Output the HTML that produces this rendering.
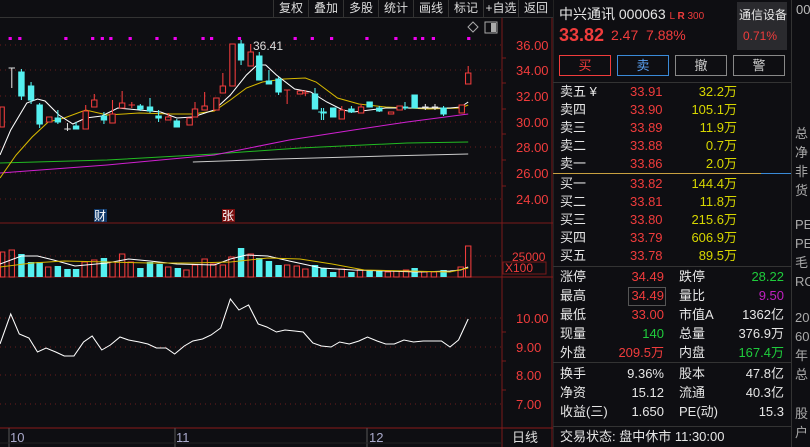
<!DOCTYPE html>
<html><head><meta charset="utf-8"><style>
*{margin:0;padding:0;box-sizing:border-box}
body{width:810px;height:447px;background:#0e0e12;overflow:hidden;position:relative;font-family:"Liberation Sans","Noto Sans CJK SC",sans-serif;color:#ddd}
.abs{position:absolute;white-space:nowrap}
.tb{position:absolute;top:0;height:17px;width:35px;border-left:1px solid #333;font-size:12px;color:#ddd;text-align:center;line-height:16px}
.r{color:#f03c3c}.g{color:#1fcc3c}.y{color:#d6d600}.w{color:#e6e6e6}
.row{position:absolute;left:560px;font-size:13px;height:18px;line-height:18px}
.btn{position:absolute;top:55px;width:52px;height:21px;border:1px solid #888;text-align:center;font-size:13px;line-height:19px;color:#ccc}
.hl{position:absolute;left:553px;width:238px;height:1px;background:#333}
</style></head><body>
<!-- toolbar -->
<div class="abs" style="left:0;top:17px;width:553px;height:1px;background:#333"></div>
<div class="tb" style="left:273px">复权</div><div class="tb" style="left:308px">叠加</div><div class="tb" style="left:343px">多股</div><div class="tb" style="left:378px">统计</div><div class="tb" style="left:413px">画线</div><div class="tb" style="left:448px">标记</div><div class="tb" style="left:483px">+自选</div><div class="tb" style="left:518px">返回</div>

<svg class="abs" style="left:0;top:0" width="553" height="447">
<g stroke="#7a1a1a" stroke-width="1">
<line x1="502" y1="18" x2="502" y2="447"/>
<line x1="0" y1="223" x2="553" y2="223"/>
<line x1="0" y1="277" x2="553" y2="277" stroke="#8a1a1a"/>
<line x1="0" y1="428" x2="553" y2="428" stroke="#8a1a1a"/>
<line x1="552" y1="18" x2="552" y2="447"/>
</g>
<g stroke="#6a1c1c" stroke-dasharray="1,4">
<line x1="0" y1="45" x2="502" y2="45"/><line x1="0" y1="70" x2="502" y2="70"/><line x1="0" y1="96" x2="502" y2="96"/><line x1="0" y1="122" x2="502" y2="122"/><line x1="0" y1="147" x2="502" y2="147"/><line x1="0" y1="173" x2="502" y2="173"/><line x1="0" y1="199" x2="502" y2="199"/>
<line x1="0" y1="256" x2="502" y2="256"/>
<line x1="0" y1="318" x2="502" y2="318"/><line x1="0" y1="347" x2="502" y2="347"/><line x1="0" y1="375" x2="502" y2="375"/><line x1="0" y1="404" x2="502" y2="404"/>
</g>
<g fill="#f03c3c" font-size="13">
<text x="516" y="50">36.00</text><text x="516" y="75">34.00</text><text x="516" y="101">32.00</text><text x="516" y="127">30.00</text><text x="516" y="152">28.00</text><text x="516" y="178">26.00</text><text x="516" y="204">24.00</text>
<text x="512" y="261" font-size="12">25000</text><text x="505" y="272" font-size="12">X100</text>
<text x="516" y="323">10.00</text><text x="516" y="352">9.00</text><text x="516" y="380">8.00</text><text x="516" y="409">7.00</text>
</g>
<rect x="503" y="262" width="43" height="12" fill="none" stroke="#7a1a1a"/>
<g stroke="#7a1a1a"><line x1="502" y1="58" x2="506" y2="58"/><line x1="502" y1="83" x2="506" y2="83"/><line x1="502" y1="109" x2="506" y2="109"/><line x1="502" y1="134" x2="506" y2="134"/><line x1="502" y1="160" x2="506" y2="160"/><line x1="502" y1="186" x2="506" y2="186"/><line x1="502" y1="332" x2="506" y2="332"/><line x1="502" y1="361" x2="506" y2="361"/><line x1="502" y1="390" x2="506" y2="390"/></g>
<!-- icons -->
<path d="M473 22 l5 5 -5 5 -5 -5z" fill="none" stroke="#aaa"/>
<rect x="485" y="22" width="12" height="11" fill="none" stroke="#aaa"/><rect x="491" y="23" width="5" height="9" fill="#aaa"/>
<!-- date axis -->
<g fill="#aac" font-size="13"><text x="10" y="442">10</text><text x="176" y="442">11</text><text x="369" y="442">12</text></g>
<text x="512" y="442" fill="#ddd" font-size="13">日线</text>
<g stroke="#555"><line x1="9" y1="428" x2="9" y2="447"/><line x1="175" y1="428" x2="175" y2="447"/><line x1="367" y1="428" x2="367" y2="447"/><line x1="0" y1="443" x2="502" y2="443" stroke="#222"/></g>
<rect x="94" y="209" width="13" height="13" fill="#123a6a"/><text x="94" y="220" fill="#fff" font-size="12">财</text>
<rect x="222" y="209" width="13" height="13" fill="#7a1010"/><text x="222" y="220" fill="#fff" font-size="12">张</text>
<text x="253" y="50" fill="#ddd" font-size="12">36.41</text>

<g transform="scale(1.0714,1)">
<!-- magenta dots -->
<g fill="#ee00ee"><rect x="8" y="37" width="3" height="3"/><rect x="17" y="37" width="3" height="3"/><rect x="60" y="37" width="3" height="3"/><rect x="85" y="37" width="3" height="3"/><rect x="94" y="37" width="3" height="3"/><rect x="102" y="37" width="3" height="3"/><rect x="120" y="37" width="3" height="3"/><rect x="145" y="37" width="3" height="3"/><rect x="162" y="37" width="3" height="3"/><rect x="188" y="37" width="3" height="3"/><rect x="196" y="37" width="3" height="3"/><rect x="222" y="37" width="3" height="3"/><rect x="274" y="37" width="3" height="3"/><rect x="290" y="37" width="3" height="3"/><rect x="308" y="37" width="3" height="3"/><rect x="341" y="37" width="3" height="3"/><rect x="368" y="37" width="3" height="3"/><rect x="386" y="37" width="3" height="3"/><rect x="393" y="37" width="3" height="3"/><rect x="403" y="37" width="3" height="3"/><rect x="436" y="37" width="3" height="3"/></g>
<!-- MAs -->
<g fill="none" stroke-width="1">
<polyline stroke="#ccc" points="180,162 260,159 360,156 437,154"/>
<polyline stroke="#22bb22" points="0,163 100,160 200,154 280,148 380,143 437,142"/>
<polyline stroke="#d020d0" points="0,173 100,165 200,155 270,140 330,130 380,122 437,114"/>
<polyline stroke="#d6b800" points="0,178 15,155 30,137 45,122 60,118 80,110 100,115 130,113 160,114 180,114 200,111 215,100 230,88 245,82 265,79 285,78 295,82 315,98 335,104 360,107 400,109 430,108 437,105"/>
<polyline stroke="#fff" points="0,155 10,130 25,103 35,99 42,101 55,115 68,124 80,118 95,116 110,108 130,110 150,112 165,118 180,117 200,110 215,95 230,75 240,65 248,65 258,75 275,89 290,92 305,102 320,110 330,112 345,110 360,108 380,108 400,108 420,108 430,107 437,102"/>
</g>
<!-- candles -->
<g stroke-width="1">
<g fill="#55f0f0" stroke="#55f0f0">
<line x1="20" y1="69" x2="20" y2="100"/><rect x="17.5" y="72" width="5" height="24"/>
<line x1="29" y1="82" x2="29" y2="104"/><rect x="26.5" y="86" width="5" height="14"/>
<line x1="37" y1="103" x2="37" y2="128"/><rect x="34.5" y="105" width="5" height="19"/>
<line x1="54" y1="110" x2="54" y2="124"/><rect x="51.5" y="118" width="5" height="4"/>
<line x1="71" y1="122" x2="71" y2="129"/><rect x="68.5" y="126" width="5" height="3"/>
<line x1="97" y1="112" x2="97" y2="124"/><rect x="94.5" y="116" width="5" height="4"/>
<line x1="131" y1="104" x2="131" y2="111"/><rect x="128.5" y="106" width="5" height="3"/>
<line x1="140" y1="98" x2="140" y2="113"/><rect x="137.5" y="107" width="5" height="4"/>
<line x1="148" y1="110" x2="148" y2="122"/><rect x="145.5" y="116" width="5" height="2"/>
<line x1="165" y1="119" x2="165" y2="127"/><rect x="162.5" y="121" width="5" height="6"/>
<line x1="225" y1="40" x2="225" y2="65"/><rect x="222.5" y="44" width="5" height="16"/>
<line x1="242" y1="52" x2="242" y2="80"/><rect x="239.5" y="56" width="5" height="24"/>
<line x1="251" y1="70" x2="251" y2="84"/><rect x="248.5" y="81" width="5" height="3"/>
<line x1="260" y1="77" x2="260" y2="95"/><rect x="257.5" y="79" width="5" height="13"/>
<line x1="294" y1="88" x2="294" y2="109"/><rect x="291.5" y="94" width="5" height="15"/>
<line x1="302" y1="108" x2="302" y2="120"/><rect x="299.5" y="112" width="5" height="1"/>
<line x1="311" y1="108" x2="311" y2="117"/><rect x="308.5" y="108" width="5" height="9"/>
<line x1="328" y1="106" x2="328" y2="113"/><rect x="325.5" y="109" width="5" height="3"/>
<line x1="345" y1="102" x2="345" y2="107"/><rect x="342.5" y="102" width="5" height="5"/>
<line x1="354" y1="106" x2="354" y2="112"/><rect x="351.5" y="108" width="5" height="3"/>
<line x1="387" y1="95" x2="387" y2="108"/><rect x="384.5" y="95" width="5" height="13"/>
<line x1="414" y1="106" x2="414" y2="116"/><rect x="411.5" y="108" width="5" height="6"/>
<line x1="378" y1="102" x2="378" y2="110"/><rect x="375.5" y="107" width="5" height="1"/>
</g>
<g fill="#0e0e12" stroke="#f03c3c">
<rect x="0" y="107" width="4" height="20"/>
<rect x="43.5" y="117" width="5" height="5"/>
<line x1="80" y1="105" x2="80" y2="111"/><rect x="77.5" y="111" width="5" height="18"/>
<line x1="88" y1="94" x2="88" y2="100"/><rect x="85.5" y="100" width="5" height="7"/>
<line x1="105" y1="100" x2="105" y2="114"/><rect x="102.5" y="114" width="5" height="9"/>
<line x1="114" y1="91" x2="114" y2="103"/><rect x="111.5" y="103" width="5" height="5"/>
<line x1="157" y1="113" x2="157" y2="117"/><rect x="154.5" y="117" width="5" height="3"/>
<rect x="174.5" y="118" width="5" height="7"/>
<line x1="182" y1="102" x2="182" y2="109"/><rect x="179.5" y="109" width="5" height="8"/>
<line x1="191" y1="92" x2="191" y2="106"/><rect x="188.5" y="106" width="5" height="4"/>
<rect x="199.5" y="98" width="5" height="12"/>
<line x1="208" y1="73" x2="208" y2="86"/><rect x="205.5" y="86" width="5" height="7"/>
<rect x="214.5" y="44" width="5" height="42"/>
<line x1="234" y1="44" x2="234" y2="52"/><rect x="231.5" y="52" width="5" height="14"/>
<rect x="277.5" y="91" width="5" height="3"/>
<line x1="319" y1="106" x2="319" y2="110"/><rect x="316.5" y="110" width="5" height="9"/>
<line x1="337" y1="104" x2="337" y2="107"/><rect x="334.5" y="107" width="5" height="6"/>
<rect x="362.5" y="112" width="5" height="2"/>
<rect x="370.5" y="106" width="5" height="4"/>
<line x1="437" y1="66" x2="437" y2="73"/><rect x="434.5" y="73" width="5" height="11"/>
<rect x="428.5" y="105" width="5" height="8"/>
</g>
<g stroke="#f03c3c"><line x1="268" y1="90" x2="268" y2="104"/><line x1="265" y1="90" x2="271" y2="90"/><line x1="285" y1="90" x2="285" y2="96"/><line x1="282" y1="93" x2="288" y2="93"/><line x1="123" y1="102" x2="123" y2="108"/><line x1="120" y1="105" x2="126" y2="105"/></g>
<g stroke="#ddd"><line x1="11" y1="68" x2="11" y2="88"/><line x1="8" y1="68" x2="14" y2="68"/><line x1="63" y1="123" x2="63" y2="131"/><line x1="60" y1="129" x2="66" y2="129"/><line x1="397" y1="104" x2="397" y2="110"/><line x1="394" y1="107" x2="400" y2="107"/><line x1="406" y1="104" x2="406" y2="110"/><line x1="403" y1="107" x2="409" y2="107"/></g>
<g stroke="#55f0f0"><line x1="300" y1="108" x2="300" y2="120"/><line x1="297" y1="112" x2="303" y2="112"/></g>
</g>
<!-- volume bars -->
<g fill="#55f0f0">
<rect x="17" y="254" width="6" height="23"/><rect x="26" y="262" width="6" height="15"/><rect x="34" y="262" width="6" height="15"/><rect x="51" y="266" width="6" height="11"/><rect x="60" y="269" width="6" height="8"/><rect x="68" y="269" width="6" height="8"/><rect x="94" y="258" width="6" height="19"/><rect x="128" y="268" width="6" height="9"/><rect x="137" y="262" width="6" height="15"/><rect x="146" y="264" width="6" height="13"/><rect x="163" y="268" width="6" height="9"/><rect x="222" y="248" width="6" height="29"/><rect x="239" y="258" width="6" height="19"/><rect x="248" y="261" width="6" height="16"/><rect x="257" y="265" width="6" height="12"/><rect x="291" y="265" width="6" height="12"/><rect x="299" y="268" width="6" height="9"/><rect x="308" y="272" width="6" height="5"/><rect x="325" y="272" width="6" height="5"/><rect x="342" y="270" width="6" height="7"/><rect x="351" y="270" width="6" height="7"/><rect x="384" y="268" width="6" height="9"/><rect x="411" y="270" width="6" height="7"/>
</g>
<g fill="none" stroke="#f03c3c">
<rect x="0.5" y="252" width="4" height="25"/><rect x="8.5" y="250" width="5" height="27"/><rect x="42.5" y="267" width="5" height="10"/><rect x="76.5" y="262" width="5" height="15"/><rect x="85.5" y="260" width="5" height="17"/><rect x="102.5" y="262" width="5" height="15"/><rect x="111.5" y="254" width="5" height="23"/><rect x="119.5" y="262" width="5" height="15"/><rect x="154.5" y="267" width="5" height="10"/><rect x="171.5" y="270" width="5" height="7"/><rect x="179.5" y="265" width="5" height="12"/><rect x="188.5" y="259" width="5" height="18"/><rect x="196.5" y="264" width="5" height="13"/><rect x="205.5" y="265" width="5" height="12"/><rect x="213.5" y="257" width="5" height="20"/><rect x="231.5" y="254" width="5" height="23"/><rect x="265.5" y="265" width="5" height="12"/><rect x="274.5" y="266" width="5" height="11"/><rect x="282.5" y="269" width="5" height="8"/><rect x="316.5" y="269" width="5" height="8"/><rect x="333.5" y="270" width="5" height="7"/><rect x="359.5" y="272" width="5" height="5"/><rect x="367.5" y="271" width="5" height="6"/><rect x="376.5" y="270" width="5" height="7"/><rect x="393.5" y="272" width="5" height="5"/><rect x="402.5" y="272" width="5" height="5"/><rect x="427.5" y="267" width="5" height="10"/><rect x="434.5" y="246" width="5" height="31"/>
</g>
<g fill="none">
<polyline stroke="#fff" points="0,264 20,256 35,256 50,260 70,266 100,263 120,259 140,261 165,264 200,265 215,259 230,255 250,256 270,261 300,268 330,270 360,271 390,272 420,271 430,270 437,267"/>
<polyline stroke="#d6b800" points="0,267 30,263 60,261 100,262 140,263 180,263 215,262 250,258 280,259 310,264 340,270 380,271 420,272 437,268"/>
</g>
<!-- indicator line -->
<polyline fill="none" stroke="#fff" points="0,344 10,314 18,334 27,338 35,352 43,348 52,352 60,356 69,356 78,342 86,336 95,350 103,345 112,337 120,340 130,342 138,344 146,348 155,348 163,354 172,346 180,341 189,339 197,335 206,328 215,299 223,310 232,305 241,324 249,327 258,332 266,330 275,331 283,332 292,343 300,346 309,347 317,342 326,344 335,341 343,337 352,341 360,344 368,344 377,340 386,342 395,341 404,341 412,341 420,347 428,340 437,319"/>
</g>
</svg>

<!-- right panel -->
<div class="abs" style="left:791px;top:0;width:1px;height:447px;background:#333"></div>
<div class="abs" style="left:553px;top:0;width:1px;height:447px;background:#222"></div>
<div class="abs w" style="left:559px;top:4px;font-size:14px">中兴通讯 000063 <span class="r" style="font-size:10px">L <b>R</b> 300</span></div>
<div class="abs" style="left:737px;top:2px;width:50px;height:48px;background:#2a2a2e"></div>
<div class="abs w" style="left:739px;top:6px;font-size:12px">通信设备</div>
<div class="abs r" style="left:743px;top:29px;font-size:12px">0.71%</div>
<div class="abs r" style="left:559px;top:25px;font-size:18px;font-weight:bold">33.82</div>
<div class="abs r" style="left:611px;top:27px;font-size:14px">2.47&nbsp; 7.88%</div>
<div class="btn" style="left:559px;border-color:#f03c3c;color:#f03c3c">买</div>
<div class="btn" style="left:617px;border-color:#3a8ad8;color:#5aa0f0">卖</div>
<div class="btn" style="left:675px">撤</div>
<div class="btn" style="left:733px">警</div>
<div class="hl" style="top:82px"></div>
<div class="abs" style="left:553px;top:173px;width:208px;height:1px;background:#c8a040"></div>
<div class="abs" style="left:761px;top:173px;width:30px;height:1px;background:#3a8ad8"></div>
<div class="hl" style="top:266px"></div>
<div class="hl" style="top:362px"></div>
<div class="hl" style="top:426px"></div>

<div id="ob"></div>
<div class="row w" style="top:83px">卖五 ¥</div><div class="row r" style="top:83px;left:630px">33.91</div><div class="row y" style="top:83px;left:690px;width:47px;text-align:right">32.2万</div>
<div class="row w" style="top:101px">卖四</div><div class="row r" style="top:101px;left:630px">33.90</div><div class="row y" style="top:101px;left:680px;width:57px;text-align:right">105.1万</div>
<div class="row w" style="top:119px">卖三</div><div class="row r" style="top:119px;left:630px">33.89</div><div class="row y" style="top:119px;left:690px;width:47px;text-align:right">11.9万</div>
<div class="row w" style="top:137px">卖二</div><div class="row r" style="top:137px;left:630px">33.88</div><div class="row y" style="top:137px;left:690px;width:47px;text-align:right">0.7万</div>
<div class="row w" style="top:155px">卖一</div><div class="row r" style="top:155px;left:630px">33.86</div><div class="row y" style="top:155px;left:690px;width:47px;text-align:right">2.0万</div>
<div class="row w" style="top:175px">买一</div><div class="row r" style="top:175px;left:630px">33.82</div><div class="row y" style="top:175px;left:680px;width:57px;text-align:right">144.4万</div>
<div class="row w" style="top:193px">买二</div><div class="row r" style="top:193px;left:630px">33.81</div><div class="row y" style="top:193px;left:690px;width:47px;text-align:right">11.8万</div>
<div class="row w" style="top:211px">买三</div><div class="row r" style="top:211px;left:630px">33.80</div><div class="row y" style="top:211px;left:680px;width:57px;text-align:right">215.6万</div>
<div class="row w" style="top:229px">买四</div><div class="row r" style="top:229px;left:630px">33.79</div><div class="row y" style="top:229px;left:680px;width:57px;text-align:right">606.9万</div>
<div class="row w" style="top:247px">买五</div><div class="row r" style="top:247px;left:630px">33.78</div><div class="row y" style="top:247px;left:690px;width:47px;text-align:right">89.5万</div>

<div class="abs" style="left:628px;top:287px;width:38px;height:19px;border:1px solid #555"></div>
<div class="row w" style="top:268px">涨停</div><div class="row r" style="top:268px;left:610px;width:54px;text-align:right">34.49</div><div class="row w" style="top:268px;left:679px">跌停</div><div class="row g" style="top:268px;left:730px;width:54px;text-align:right">28.22</div>
<div class="row w" style="top:287px">最高</div><div class="row r" style="top:287px;left:610px;width:54px;text-align:right">34.49</div><div class="row w" style="top:287px;left:679px">量比</div><div class="row" style="top:287px;left:730px;width:54px;text-align:right;color:#c020c0">9.50</div>
<div class="row w" style="top:306px">最低</div><div class="row r" style="top:306px;left:610px;width:54px;text-align:right">33.00</div><div class="row w" style="top:306px;left:679px">市值A</div><div class="row w" style="top:306px;left:720px;width:64px;text-align:right">1362亿</div>
<div class="row w" style="top:325px">现量</div><div class="row g" style="top:325px;left:610px;width:54px;text-align:right">140</div><div class="row w" style="top:325px;left:679px">总量</div><div class="row w" style="top:325px;left:720px;width:64px;text-align:right">376.9万</div>
<div class="row w" style="top:344px">外盘</div><div class="row r" style="top:344px;left:600px;width:64px;text-align:right">209.5万</div><div class="row w" style="top:344px;left:679px">内盘</div><div class="row g" style="top:344px;left:720px;width:64px;text-align:right">167.4万</div>

<div class="row w" style="top:365px">换手</div><div class="row w" style="top:365px;left:600px;width:64px;text-align:right">9.36%</div><div class="row w" style="top:365px;left:679px">股本</div><div class="row w" style="top:365px;left:720px;width:64px;text-align:right">47.8亿</div>
<div class="row w" style="top:384px">净资</div><div class="row w" style="top:384px;left:600px;width:64px;text-align:right">15.12</div><div class="row w" style="top:384px;left:679px">流通</div><div class="row w" style="top:384px;left:720px;width:64px;text-align:right">40.3亿</div>
<div class="row w" style="top:403px">收益(三)</div><div class="row w" style="top:403px;left:600px;width:64px;text-align:right">1.650</div><div class="row w" style="top:403px;left:679px">PE(动)</div><div class="row w" style="top:403px;left:720px;width:64px;text-align:right">15.3</div>
<div class="row w" style="top:428px">交易状态: 盘中休市 11:30:00</div>

<div class="abs" style="left:796px;top:0;font-size:13px;color:#bbb;line-height:19px">00</div>
<div class="abs" style="left:795px;top:124px;font-size:13px;color:#aaa;line-height:19px">总<br>净<br>非<br>货</div>
<div class="abs" style="left:795px;top:215px;font-size:13px;color:#aaa;line-height:19px">PE<br>PE<br>毛<br>RC</div>
<div class="abs" style="left:795px;top:308px;font-size:13px;color:#aaa;line-height:19px">20<br>60<br>年<br>总</div>
<div class="abs" style="left:795px;top:404px;font-size:13px;color:#aaa;line-height:19px">股<br>户</div>
</body></html>
